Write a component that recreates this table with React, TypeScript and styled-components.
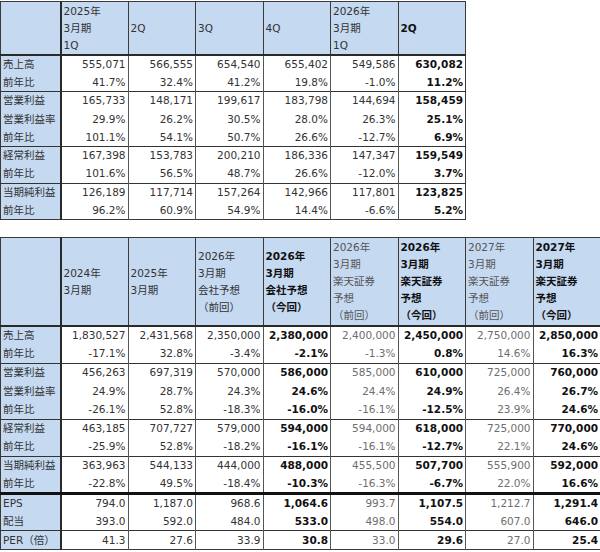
import React from 'react';
import styled, { createGlobalStyle } from 'styled-components';

const GlobalStyle = createGlobalStyle`
  html, body {
    margin: 0;
    padding: 0;
    background: #ffffff;
  }
  body {
    font-family: 'DejaVu Sans', 'Noto Sans CJK JP', sans-serif;
    color: #2a2a2a;
  }
`;

type Col = { title: string; bold?: boolean; muted?: boolean };
type Line = { label: string; values: string[] };

const quarterCols: Col[] = [
  { title: '2025年\n3月期\n1Q' },
  { title: '2Q' },
  { title: '3Q' },
  { title: '4Q' },
  { title: '2026年\n3月期\n1Q' },
  { title: '2Q', bold: true },
];

// groups of rows, a line is drawn above each group
const quarterGroups: Line[][] = [
  [
    { label: '売上高', values: ['555,071', '566,555', '654,540', '655,402', '549,586', '630,082'] },
    { label: '前年比', values: ['41.7%', '32.4%', '41.2%', '19.8%', '-1.0%', '11.2%'] },
  ],
  [
    { label: '営業利益', values: ['165,733', '148,171', '199,617', '183,798', '144,694', '158,459'] },
    { label: '営業利益率', values: ['29.9%', '26.2%', '30.5%', '28.0%', '26.3%', '25.1%'] },
    { label: '前年比', values: ['101.1%', '54.1%', '50.7%', '26.6%', '-12.7%', '6.9%'] },
  ],
  [
    { label: '経常利益', values: ['167,398', '153,783', '200,210', '186,336', '147,347', '159,549'] },
    { label: '前年比', values: ['101.6%', '56.5%', '48.7%', '26.6%', '-12.0%', '3.7%'] },
  ],
  [
    { label: '当期純利益', values: ['126,189', '117,714', '157,264', '142,966', '117,801', '123,825'] },
    { label: '前年比', values: ['96.2%', '60.9%', '54.9%', '14.4%', '-6.6%', '5.2%'] },
  ],
];

const yearCols: Col[] = [
  { title: '2024年\n3月期' },
  { title: '2025年\n3月期' },
  { title: '2026年\n3月期\n会社予想\n（前回）' },
  { title: '2026年\n3月期\n会社予想\n（今回）', bold: true },
  { title: '2026年\n3月期\n楽天証券\n予想\n（前回）', muted: true },
  { title: '2026年\n3月期\n楽天証券\n予想\n（今回）', bold: true },
  { title: '2027年\n3月期\n楽天証券\n予想\n（前回）', muted: true },
  { title: '2027年\n3月期\n楽天証券\n予想\n（今回）', bold: true },
];

const yearGroups: Line[][] = [
  [
    { label: '売上高', values: ['1,830,527', '2,431,568', '2,350,000', '2,380,000', '2,400,000', '2,450,000', '2,750,000', '2,850,000'] },
    { label: '前年比', values: ['-17.1%', '32.8%', '-3.4%', '-2.1%', '-1.3%', '0.8%', '14.6%', '16.3%'] },
  ],
  [
    { label: '営業利益', values: ['456,263', '697,319', '570,000', '586,000', '585,000', '610,000', '725,000', '760,000'] },
    { label: '営業利益率', values: ['24.9%', '28.7%', '24.3%', '24.6%', '24.4%', '24.9%', '26.4%', '26.7%'] },
    { label: '前年比', values: ['-26.1%', '52.8%', '-18.3%', '-16.0%', '-16.1%', '-12.5%', '23.9%', '24.6%'] },
  ],
  [
    { label: '経常利益', values: ['463,185', '707,727', '579,000', '594,000', '594,000', '618,000', '725,000', '770,000'] },
    { label: '前年比', values: ['-25.9%', '52.8%', '-18.2%', '-16.1%', '-16.1%', '-12.7%', '22.1%', '24.6%'] },
  ],
  [
    { label: '当期純利益', values: ['363,963', '544,133', '444,000', '488,000', '455,500', '507,700', '555,900', '592,000'] },
    { label: '前年比', values: ['-22.8%', '49.5%', '-18.4%', '-10.3%', '-16.3%', '-6.7%', '22.0%', '16.6%'] },
  ],
  [
    { label: 'EPS', values: ['794.0', '1,187.0', '968.6', '1,064.6', '993.7', '1,107.5', '1,212.7', '1,291.4'] },
    { label: '配当', values: ['393.0', '592.0', '484.0', '533.0', '498.0', '554.0', '607.0', '646.0'] },
  ],
  [
    { label: 'PER（倍）', values: ['41.3', '27.6', '33.9', '30.8', '33.0', '29.6', '27.0', '25.4'] },
  ],
];

const FinTable = ({
  cols,
  groups,
  headHeight,
  rowHeight,
  thickGroup,
}: {
  cols: Col[];
  groups: Line[][];
  headHeight: number;
  rowHeight: number;
  thickGroup?: number;
}) => (
  <Table $width={60 + cols.length * 67.5}>
    <colgroup>
      <col style={{ width: 60 }} />
      {cols.map((_, i) => (
        <col key={i} style={{ width: 67.5 }} />
      ))}
    </colgroup>
    <thead>
      <tr>
        <Corner $height={headHeight} />
        {cols.map((c, i) => (
          <HeadCell key={i} $bold={c.bold} $muted={c.muted}>
            {c.title}
          </HeadCell>
        ))}
      </tr>
    </thead>
    <tbody>
      {groups.map((group, g) =>
        group.map((line, r) => (
          <Row
            key={`${g}-${r}`}
            $height={rowHeight}
            $first={r === 0}
            $thick={r === 0 && g === thickGroup}
          >
            <LabelCell>{line.label}</LabelCell>
            {line.values.map((v, i) => (
              <ValueCell key={i} $bold={cols[i].bold} $muted={cols[i].muted}>
                {v}
              </ValueCell>
            ))}
          </Row>
        ))
      )}
    </tbody>
  </Table>
);

export default function App() {
  return (
    <Page>
      <GlobalStyle />
      <FinTable cols={quarterCols} groups={quarterGroups} headHeight={52} rowHeight={18.3} />
      <FinTable
        cols={yearCols}
        groups={yearGroups}
        headHeight={87}
        rowHeight={18.6}
        thickGroup={4}
      />
    </Page>
  );
}

const Page = styled.div`
  width: 600px;
  display: flex;
  flex-direction: column;
  align-items: flex-start;
  gap: 17px;
  padding-top: 1px;
`;

const Table = styled.table<{ $width: number }>`
  width: ${(p) => p.$width}px;
  table-layout: fixed;
  border-collapse: collapse;
  font-size: 10.5px;
  border: 1px solid #3a3a3a;
`;

const Corner = styled.th<{ $height: number }>`
  height: ${(p) => p.$height}px;
  background: #c5d9f1;
  border-right: 2px solid #2a2a2a;
  border-bottom: 2px solid #2a2a2a;
  padding: 0;
`;

const HeadCell = styled.th<{ $bold?: boolean; $muted?: boolean }>`
  background: #c5d9f1;
  border-left: 1px solid #3a3a3a;
  border-bottom: 2px solid #2a2a2a;
  padding: 0 2px;
  text-align: left;
  vertical-align: middle;
  white-space: pre-line;
  line-height: 17px;
  font-weight: ${(p) => (p.$bold ? 700 : 400)};
  color: ${(p) => (p.$bold ? '#111' : p.$muted ? '#555' : '#333')};
`;

const Row = styled.tr<{ $height: number; $first?: boolean; $thick?: boolean }>`
  height: ${(p) => p.$height}px;
  & > td {
    border-top: ${(p) => (p.$thick ? '3px solid #111' : p.$first ? '1px solid #333' : 'none')};
  }
`;

const LabelCell = styled.td`
  background: #c5d9f1;
  border-right: 2px solid #2a2a2a;
  padding: 0 2px;
  white-space: nowrap;
  line-height: 17px;
  color: #333;
`;

const ValueCell = styled.td<{ $bold?: boolean; $muted?: boolean }>`
  border-left: 1px solid #555;
  padding: 0 2px 0 0;
  text-align: right;
  white-space: nowrap;
  line-height: 17px;
  font-weight: ${(p) => (p.$bold ? 700 : 400)};
  color: ${(p) => (p.$bold ? '#111' : p.$muted ? '#6e6e6e' : '#333')};
`;
